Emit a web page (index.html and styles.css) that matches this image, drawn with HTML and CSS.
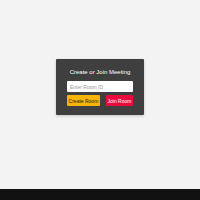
FILE: index.html
```html
<!DOCTYPE html>
<html lang="en">
<head>
  <meta charset="UTF-8">
  <meta name="viewport" content="width=device-width, initial-scale=1">
  <title>Meeting</title>
  <link rel="stylesheet" href="styles.css">
</head>
<body>
  <main class="page">
    <section class="join-card">
      <h2>Create or Join Meeting</h2>
      <input type="text" class="room-input" placeholder="Enter Room ID">
      <div class="actions">
        <button class="create-btn">Create Room</button>
        <button class="join-btn">Join Room</button>
      </div>
    </section>
  </main>
  <footer></footer>
</body>
</html>
```

FILE: styles.css
```css
* { margin: 0; padding: 0; box-sizing: border-box; }
html, body { height: 100%; }
body { font-family: 'Liberation Sans', Arial, sans-serif; background: #f3f3f3; display: flex; flex-direction: column; }
.page { flex: 1; display: flex; justify-content: center; align-items: flex-start; padding-top: 59px; }
.join-card { width: 88px; background: #3f3f3f; padding: 10px 11px 9px; border-radius: 1px; box-shadow: 0 1px 3px rgba(0,0,0,0.2); }
.join-card h2 { color: #fff; font-size: 6px; font-weight: normal; text-align: center; margin-bottom: 6px; white-space: nowrap; }
.room-input { display: block; width: 100%; height: 11px; padding: 0 3px; border: none; border-radius: 1px; background: #fff; font-family: inherit; font-size: 5px; color: #333; margin-bottom: 3px; }
.room-input::placeholder { color: #999; }
.actions { display: flex; gap: 6px; }
.actions button { height: 11px; padding: 0; border: none; border-radius: 1px; font-family: inherit; font-size: 5px; white-space: nowrap; cursor: pointer; }
.create-btn { background: #f5b50a; color: #222; width: 34px; }
.join-btn { background: #ea0a3c; color: #fff; width: 28px; }
footer { height: 11px; background: #111; }
```
